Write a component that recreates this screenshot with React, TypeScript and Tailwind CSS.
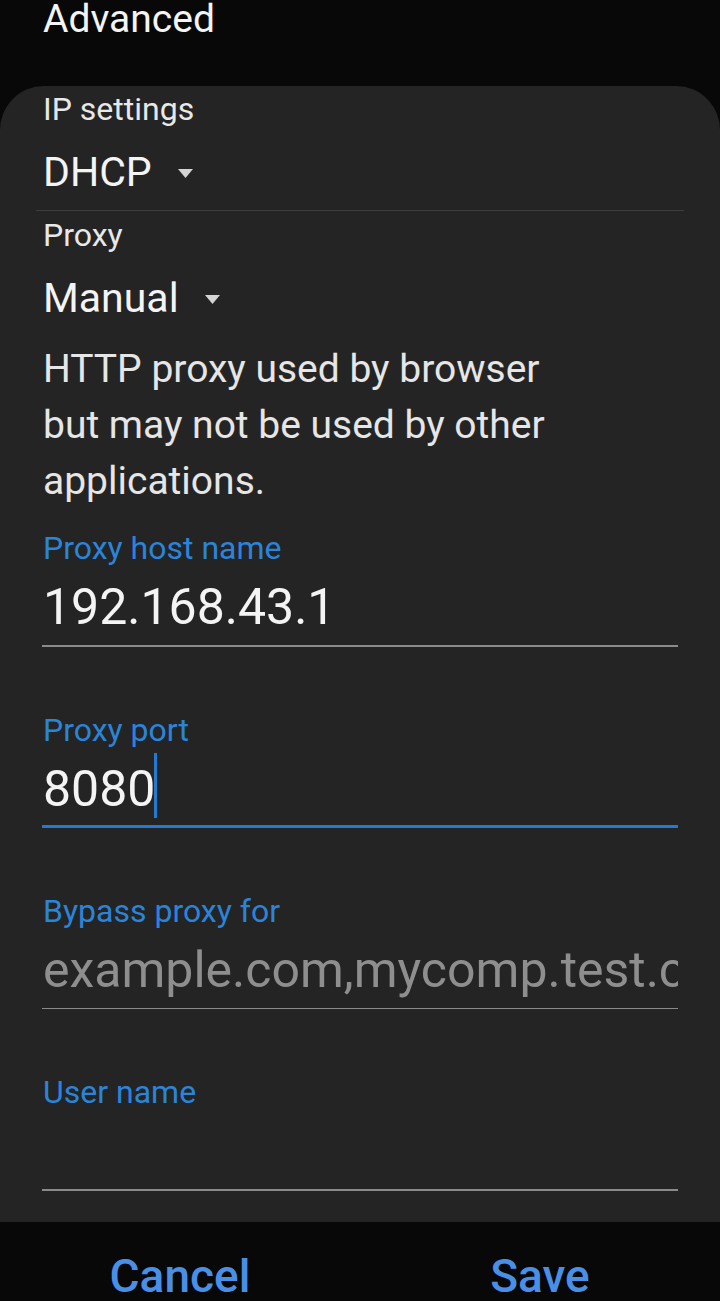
import React from "react";

const font = { fontFamily: "Roboto, 'Noto Sans', sans-serif" };

function Caret() {
  return (
    <svg width="17" height="11" viewBox="0 0 17 11" className="ml-[25px] mt-[2px]">
      <path d="M1 1 L16 1 L8.5 10 Z" fill="#d4d4d4" />
    </svg>
  );
}

function Field({
  label,
  value,
  muted,
  active,
  first,
}: {
  label: string;
  value?: string;
  muted?: boolean;
  active?: boolean;
  first?: boolean;
}) {
  return (
    <div className={first ? "mt-[23px]" : "mt-[67px]"}>
      <div className="pl-px text-[32px] leading-none text-[#2a85da]">{label}</div>
      <div
        className={
          "relative mt-[13px] h-[60px] overflow-hidden whitespace-nowrap pl-px text-[50px] leading-[60px] " +
          (muted ? "text-[#8e8e8e]" : "text-[#f4f4f4]")
        }
      >
        {value}
      </div>
      {active && (
        <div className="relative">
          <div className="absolute left-[112px] top-[-66px] h-[65px] w-[3px] bg-[#2479d0]" />
        </div>
      )}
      <div
        className={
          active
            ? "mt-[6px] h-[3px] bg-[#2479d0]"
            : "mt-[8px] h-[1.5px] bg-[#8a8a8a]"
        }
      />
    </div>
  );
}

export default function App() {
  return (
    <div className="flex h-[1301px] w-[720px] flex-col overflow-hidden bg-[#080808]" style={font}>
      <div className="h-[86px] px-[43px]">
        <div className="text-[39px] leading-none text-[#f4f4f4]">Advanced</div>
      </div>

      <div className="rounded-t-[44px] bg-[#242424] pb-[31px]">
        <div className="px-[43px] pt-[7px]">
          <div className="text-[32px] leading-none text-[#e8e8e8]">IP settings</div>
          <div className="mt-[27px] flex items-center">
            <span className="text-[41px] leading-none text-[#f4f4f4]">DHCP</span>
            <Caret />
          </div>
        </div>
        <div className="mx-[36px] mt-[17px] h-px bg-[#3d3d3d]" />
        <div className="px-[43px]">
          <div className="mt-[8px] text-[32px] leading-none text-[#e8e8e8]">Proxy</div>
          <div className="mt-[27px] flex items-center">
            <span className="text-[41px] leading-none text-[#f4f4f4]">Manual</span>
            <Caret />
          </div>
          <p className="mt-[22px] text-[39px] leading-[56px] text-[#e6e6e6]">
            HTTP proxy used by browser
            <br />
            but may not be used by other
            <br />
            applications.
          </p>
        </div>

        <div className="mx-[42px]">
          <Field first label="Proxy host name" value="192.168.43.1" />
          <Field label="Proxy port" value="8080" active />
          <Field label="Bypass proxy for" value="example.com,mycomp.test.com" muted />
          <Field label="User name" value="" />
        </div>
      </div>

      <div className="flex flex-1 pt-[29px]">
        <button className="flex-1 text-center text-[46px] font-medium leading-none text-[#4a8fe6]">
          Cancel
        </button>
        <button className="flex-1 text-center text-[46px] font-medium leading-none text-[#4a8fe6]">
          Save
        </button>
      </div>
    </div>
  );
}
